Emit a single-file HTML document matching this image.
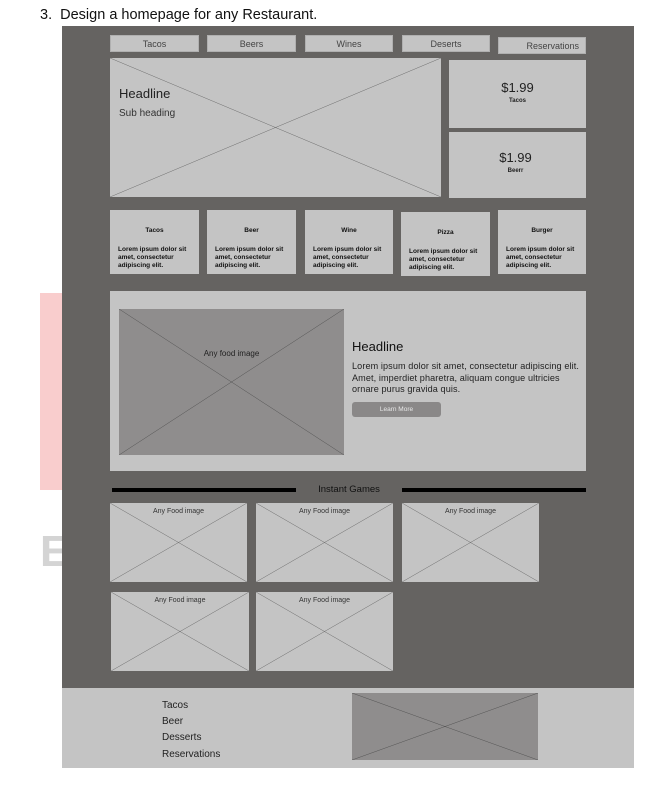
<!DOCTYPE html>
<html><head><meta charset="utf-8"><style>
*{margin:0;padding:0;box-sizing:border-box}
body{width:661px;height:801px;background:#fff;position:relative;overflow:hidden;font-family:"Liberation Sans",Arial,sans-serif;color:#222}
.a{position:absolute}
.box{position:absolute;background:#c4c4c4}
.box svg{position:absolute;left:0;top:0;width:100%;height:100%}
.nav{position:absolute;background:#c4c4c4;font-size:9px;color:#444;text-align:center;line-height:16px;border:1px solid #b0b0b0}
.card{position:absolute;background:#c4c4c4;font-size:6.5px;font-weight:bold;color:#111;padding:0 8px}
.card .t{text-align:center;margin-top:17px}
.card .b{margin-top:12px;line-height:8px}
.g{font-size:7px;color:#333;text-align:center;position:absolute;width:100%;top:5px}
</style></head><body>
<div class="a" style="left:40px;top:7px;font-size:14.5px;color:#111">3.&nbsp; Design a homepage for any Restaurant.</div>
<div class="a" style="left:40px;top:293px;width:22px;height:197px;background:#f9cdcd"></div>
<div class="a" style="left:40px;top:528px;font-size:44px;font-weight:bold;color:#d4d4d4;line-height:48px">E</div>
<div class="a" style="left:62px;top:26px;width:572px;height:662px;background:#656361"></div>
<div class="a" style="left:62px;top:688px;width:572px;height:80px;background:#c4c4c4"></div>

<div class="nav" style="left:110px;top:35px;width:89px;height:17px">Tacos</div>
<div class="nav" style="left:207px;top:35px;width:89px;height:17px">Beers</div>
<div class="nav" style="left:305px;top:35px;width:88px;height:17px">Wines</div>
<div class="nav" style="left:402px;top:35px;width:88px;height:17px">Deserts</div>
<div class="nav" style="left:498px;top:37px;width:88px;height:17px;text-align:right;padding-right:6px">Reservations</div>

<div class="box" style="left:110px;top:58px;width:331px;height:139px"><svg viewBox="0 0 100 100" preserveAspectRatio="none"><path d="M0 0L100 100M100 0L0 100" stroke="#555" stroke-width="0.4" vector-effect="non-scaling-stroke"/></svg>
<div class="a" style="left:9px;top:28px;font-size:13px;color:#222">Headline</div>
<div class="a" style="left:9px;top:50px;font-size:10px;color:#333">Sub heading</div></div>

<div class="box" style="left:449px;top:60px;width:137px;height:68px"><div class="a" style="width:100%;text-align:center;top:20px;font-size:13px">$1.99</div><div class="a" style="width:100%;text-align:center;top:38px;font-size:6px;font-weight:bold">Tacos</div></div>
<div class="box" style="left:449px;top:132px;width:137px;height:66px"><div class="a" style="width:100%;text-align:center;top:18px;font-size:13px;padding-right:4px">$1.99</div><div class="a" style="width:100%;text-align:center;top:36px;font-size:6px;font-weight:bold;padding-right:4px">Beerr</div></div>

<div class="card" style="left:110px;top:210px;width:89px;height:64px"><div class="t">Tacos</div><div class="b">Lorem ipsum dolor sit amet, consectetur adipiscing elit.</div></div>
<div class="card" style="left:207px;top:210px;width:89px;height:64px"><div class="t">Beer</div><div class="b">Lorem ipsum dolor sit amet, consectetur adipiscing elit.</div></div>
<div class="card" style="left:305px;top:210px;width:88px;height:64px"><div class="t">Wine</div><div class="b">Lorem ipsum dolor sit amet, consectetur adipiscing elit.</div></div>
<div class="card" style="left:401px;top:212px;width:89px;height:64px"><div class="t">Pizza</div><div class="b">Lorem ipsum dolor sit amet, consectetur adipiscing elit.</div></div>
<div class="card" style="left:498px;top:210px;width:88px;height:64px"><div class="t">Burger</div><div class="b">Lorem ipsum dolor sit amet, consectetur adipiscing elit.</div></div>

<div class="box" style="left:110px;top:291px;width:476px;height:180px"></div>
<div class="box" style="left:119px;top:309px;width:225px;height:146px;background:#8f8d8d"><svg viewBox="0 0 100 100" preserveAspectRatio="none"><path d="M0 0L100 100M100 0L0 100" stroke="#444" stroke-width="0.4" vector-effect="non-scaling-stroke"/></svg><div class="a" style="width:100%;text-align:center;top:40px;font-size:8px;color:#222">Any food image</div></div>
<div class="a" style="left:352px;top:339px;font-size:13px;color:#111">Headline</div>
<div class="a" style="left:352px;top:361px;width:234px;font-size:9.1px;letter-spacing:0.1px;line-height:11.5px;color:#222">Lorem ipsum dolor sit amet, consectetur adipiscing elit. Amet, imperdiet pharetra, aliquam congue ultricies ornare purus gravida quis.</div>
<div class="a" style="left:352px;top:402px;width:89px;height:15px;background:#8a8888;border-radius:3px;color:#e8e8e8;font-size:6.5px;text-align:center;line-height:15px">Learn More</div>

<div class="a" style="left:112px;top:488px;width:184px;height:4px;background:#000"></div>
<div class="a" style="left:402px;top:488px;width:184px;height:4px;background:#000"></div>
<div class="a" style="left:296px;top:484px;width:106px;text-align:center;font-size:9.5px;color:#111">Instant Games</div>

<div class="box" style="left:110px;top:503px;width:137px;height:79px"><svg viewBox="0 0 100 100" preserveAspectRatio="none"><path d="M0 0L100 100M100 0L0 100" stroke="#555" stroke-width="0.4" vector-effect="non-scaling-stroke"/></svg><div class="g">Any Food image</div></div>
<div class="box" style="left:256px;top:503px;width:137px;height:79px"><svg viewBox="0 0 100 100" preserveAspectRatio="none"><path d="M0 0L100 100M100 0L0 100" stroke="#555" stroke-width="0.4" vector-effect="non-scaling-stroke"/></svg><div class="g">Any Food image</div></div>
<div class="box" style="left:402px;top:503px;width:137px;height:79px"><svg viewBox="0 0 100 100" preserveAspectRatio="none"><path d="M0 0L100 100M100 0L0 100" stroke="#555" stroke-width="0.4" vector-effect="non-scaling-stroke"/></svg><div class="g">Any Food image</div></div>
<div class="box" style="left:111px;top:592px;width:138px;height:79px"><svg viewBox="0 0 100 100" preserveAspectRatio="none"><path d="M0 0L100 100M100 0L0 100" stroke="#555" stroke-width="0.4" vector-effect="non-scaling-stroke"/></svg><div class="g">Any Food image</div></div>
<div class="box" style="left:256px;top:592px;width:137px;height:79px"><svg viewBox="0 0 100 100" preserveAspectRatio="none"><path d="M0 0L100 100M100 0L0 100" stroke="#555" stroke-width="0.4" vector-effect="non-scaling-stroke"/></svg><div class="g">Any Food image</div></div>

<div class="a" style="left:162px;top:698px;font-size:10px;color:#222;line-height:16px">Tacos<br>Beer<br>Desserts<br><span style="display:block;margin-top:1px">Reservations</span></div>
<div class="box" style="left:352px;top:693px;width:186px;height:67px;background:#8f8d8d"><svg viewBox="0 0 100 100" preserveAspectRatio="none"><path d="M0 0L100 100M100 0L0 100" stroke="#444" stroke-width="0.4" vector-effect="non-scaling-stroke"/></svg></div>
</body></html>
